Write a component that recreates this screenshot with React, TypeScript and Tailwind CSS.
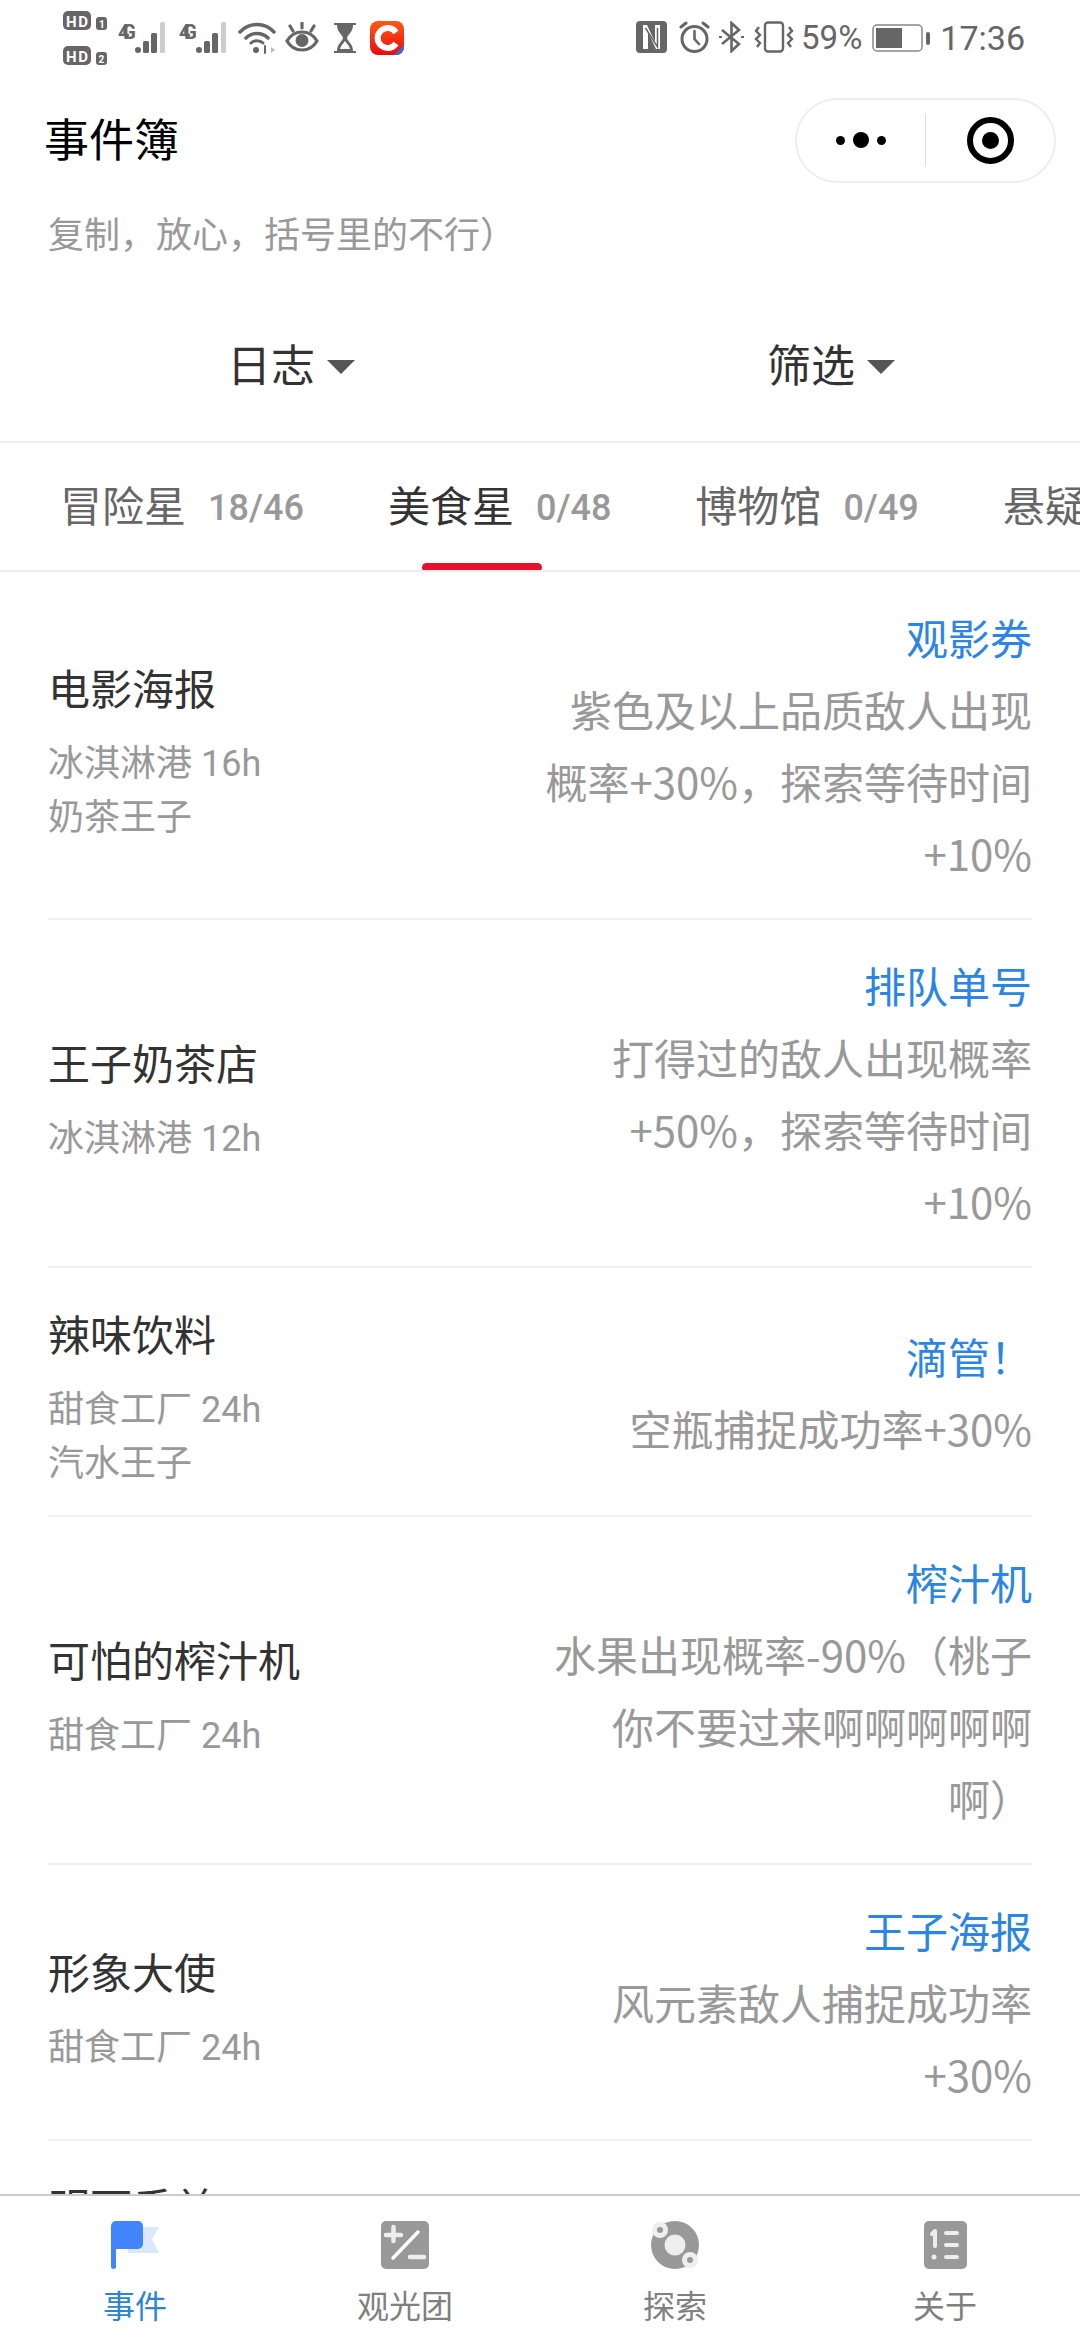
import React from 'react';

interface EventRow {
  title: string;
  subs: string[];
  reward: string;
  desc: string;
}

const rows: EventRow[] = [
  { title: '电影海报', subs: ['冰淇淋港 16h', '奶茶王子'], reward: '观影券', desc: '紫色及以上品质敌人出现概率+30%，探索等待时间+10%' },
  { title: '王子奶茶店', subs: ['冰淇淋港 12h'], reward: '排队单号', desc: '打得过的敌人出现概率+50%，探索等待时间+10%' },
  { title: '辣味饮料', subs: ['甜食工厂 24h', '汽水王子'], reward: '滴管！', desc: '空瓶捕捉成功率+30%' },
  { title: '可怕的榨汁机', subs: ['甜食工厂 24h'], reward: '榨汁机', desc: '水果出现概率-90%（桃子你不要过来啊啊啊啊啊\n啊）' },
  { title: '形象大使', subs: ['甜食工厂 24h'], reward: '王子海报', desc: '风元素敌人捕捉成功率+30%' },
  { title: '明可香兰 3D', subs: ['甜食工厂 24h', '汽水王子'], reward: '滴管！', desc: '空瓶捕捉成功率+30%' },
];

const tabs = [
  { name: '冒险星', count: '18/46' },
  { name: '美食星', count: '0/48', active: true },
  { name: '博物馆', count: '0/49' },
  { name: '悬疑推理', count: '0/32' },
];

function Signal() {
  return (
    <svg width="50" height="34" viewBox="0 0 50 34">
      <text x="0" y="17" fontSize="20" fontWeight="700" fill="#666" fontFamily="Roboto" textLength="18">4G</text>
      <rect x="17" y="25" width="6" height="6" rx="3" fill="#666" />
      <rect x="25" y="19" width="6" height="12" rx="1.5" fill="#666" />
      <rect x="33" y="11" width="6" height="20" rx="1.5" fill="#666" />
      <rect x="42" y="0" width="5" height="31" rx="1.5" fill="#ccc" />
    </svg>
  );
}

function HdMarks() {
  return (
    <svg width="46" height="56" viewBox="0 0 46 56">
      <rect x="0" y="1" width="28" height="19" rx="5" fill="#666" />
      <text x="3" y="16.5" fontSize="15" fontWeight="700" fill="#fff" fontFamily="Roboto" textLength="22">HD</text>
      <rect x="33" y="7" width="11" height="13" rx="3" fill="#666" />
      <text x="36" y="18" fontSize="10" fontWeight="700" fill="#fff" fontFamily="Roboto">1</text>
      <rect x="0" y="36" width="28" height="19" rx="5" fill="#666" />
      <text x="3" y="51.5" fontSize="15" fontWeight="700" fill="#fff" fontFamily="Roboto" textLength="22">HD</text>
      <rect x="33" y="42" width="11" height="13" rx="3" fill="#666" />
      <text x="35.5" y="53" fontSize="10" fontWeight="700" fill="#fff" fontFamily="Roboto">2</text>
    </svg>
  );
}

function StatusBar() {
  return (
    <div className="flex h-[70px] items-start justify-between pr-[55px] pl-[63px] text-[#666]">
      <div className="flex items-start">
        <div className="mt-[10px]"><HdMarks /></div>
        <div className="mt-[22px] ml-[9px]"><Signal /></div>
        <div className="mt-[22px] ml-[11px]"><Signal /></div>
        <svg className="mt-[22px] ml-[9px]" width="38" height="32" viewBox="0 0 38 32" fill="none" stroke="#666" strokeWidth="3.5" strokeLinecap="round">
          <path d="M2 10 C11 0 27 0 36 10" />
          <path d="M8 16 C14 10 24 10 30 16" />
          <path d="M13 21 C16 18 22 18 25 21" strokeWidth="3" />
          <circle cx="18" cy="28" r="3" fill="#666" stroke="none" />
          <path d="M27 24 V31" strokeWidth="2" />
          <path d="M33 25 L37 28 L33 31 Z" fill="#bbb" stroke="none" />
        </svg>
        <svg className="mt-[22px] ml-[9px]" width="34" height="32" viewBox="0 0 34 32" fill="none" stroke="#666" strokeWidth="3.2" strokeLinecap="round">
          <path d="M2 19 C9 7 25 7 32 19 C25 31 9 31 2 19 Z" />
          <circle cx="17" cy="18.5" r="6.5" fill="#666" stroke="none" />
          <path d="M17 1 V6 M5 4 L8 9 M29 4 L26 9" />
        </svg>
        <svg className="mt-[22px] ml-[14px]" width="24" height="32" viewBox="0 0 24 32">
          <path d="M1 1 H23 V3 H20 C20 10 15 12 14 16 C15 20 20 22 20 29 H23 V31 H1 V29 H4 C4 22 9 20 10 16 C9 12 4 10 4 3 H1 Z" fill="#666" />
          <path d="M7 27 C8 23 11 21 12 19 C13 21 16 23 17 27 Z" fill="#fff" />
          <path d="M9 29 C10 26 14 26 15 29 Z" fill="#666" />
        </svg>
        <svg className="mt-[21px] ml-[13px]" width="34" height="34" viewBox="0 0 34 34">
          <defs>
            <linearGradient id="cIcon" x1="0" y1="0" x2="0" y2="1">
              <stop offset="0" stopColor="#ff5a12" />
              <stop offset="1" stopColor="#e90b12" />
            </linearGradient>
          </defs>
          <rect width="34" height="34" rx="8" fill="url(#cIcon)" />
          <path d="M26 11.5 A10 10 0 1 0 26 22.5" fill="none" stroke="#fff" strokeWidth="6" />
          <path d="M34 24 V26 A8 8 0 0 1 26 34 H24 Z" fill="#2d6fd8" />
        </svg>
      </div>
      <div className="mt-[20px] flex items-start">
        <svg className="mt-[1px]" width="31" height="32" viewBox="0 0 31 32">
          <rect width="31" height="32" rx="4" fill="#666" />
          <path d="M9 4 H7 V28 H12 V11 L20 28 H24 V4 H19 V21 L11 4 Z" fill="#fff" />
          <path d="M9.5 7 L21.5 26 V7" fill="none" stroke="#666" strokeWidth="1.5" />
        </svg>
        <svg className="mt-[1px] ml-[12px]" width="31" height="32" viewBox="0 0 31 32" fill="none" stroke="#666" strokeWidth="3" strokeLinecap="round">
          <circle cx="15.5" cy="18" r="12.5" />
          <path d="M15.5 10 V18 L20 23" strokeWidth="2.6" />
          <path d="M2 6 L7 2 M29 6 L24 2" />
        </svg>
        <svg className="mt-[1px] ml-[9px]" width="25" height="32" viewBox="0 0 25 32" fill="none" stroke="#666" strokeWidth="2.6">
          <path d="M3 9 L20 23 L12.5 30 V2 L20 9 L3 23" />
          <path d="M0 16 H3 M22 16 H25" strokeWidth="2" />
        </svg>
        <svg className="mt-[1px] ml-[10px]" width="40" height="32" viewBox="0 0 40 32" fill="none" stroke="#666" strokeWidth="2.4">
          <rect x="11" y="1.5" width="18" height="29" rx="3" />
          <path d="M5 6 L2 10 L6 14 L2 18 L6 22 L3 26" />
          <path d="M35 6 L38 10 L34 14 L38 18 L34 22 L37 26" />
        </svg>
        <span className="ml-[7px] text-[33px] leading-[36px]">59%</span>
        <svg className="mt-[4px] ml-[10px]" width="59" height="28" viewBox="0 0 59 28">
          <rect x="1" y="1" width="49" height="26" rx="4" fill="none" stroke="#888" strokeWidth="1.5" />
          <rect x="4" y="4" width="26" height="20" fill="#666" />
          <rect x="54" y="8" width="4" height="13" rx="2" fill="#666" />
        </svg>
        <span className="ml-[9px] text-[34px] leading-[36px]">17:36</span>
      </div>
    </div>
  );
}

function Capsule() {
  return (
    <div className="flex h-[85px] w-[261px] items-center rounded-full border-2 border-[#eee] bg-white">
      <div className="flex w-[128px] items-center justify-center gap-[8px]">
        <span className="h-[9px] w-[9px] rounded-full bg-black" />
        <span className="h-[16px] w-[16px] rounded-full bg-black" />
        <span className="h-[9px] w-[9px] rounded-full bg-black" />
      </div>
      <div className="h-[52px] w-px bg-[#ddd]" />
      <div className="flex flex-1 items-center justify-center">
        <div className="flex h-[47px] w-[47px] items-center justify-center rounded-full border-[6px] border-black">
          <span className="h-[17px] w-[17px] rounded-full bg-black" />
        </div>
      </div>
    </div>
  );
}

function Filter({ label }: { label: string }) {
  return (
    <div className="flex w-[540px] items-center justify-center gap-[12px] pt-[2px] pl-[42px]">
      <span className="text-[44px] text-[#333]">{label}</span>
      <span className="h-0 w-0 border-x-[14px] border-t-[14px] border-x-transparent border-t-[#555]" />
    </div>
  );
}

function TabStrip() {
  return (
    <div className="flex h-[131px] items-center gap-[84px] overflow-hidden border-y-2 border-[#eee] pl-[60px]">
      {tabs.map((tab) => (
        <div key={tab.name} className="relative flex h-full shrink-0 items-center gap-[22px] pt-[2px] whitespace-nowrap">
          <span className={`text-[42px] ${tab.active ? 'text-[#333]' : 'text-[#666]'}`}>{tab.name}</span>
          <span className="text-[36px] font-medium text-[#999]">{tab.count}</span>
          {tab.active && <span className="absolute bottom-[-2px] left-[34px] h-[9px] w-[120px] rounded-full bg-[#e8112d]" />}
        </div>
      ))}
    </div>
  );
}

function Row({ row }: { row: EventRow }) {
  return (
    <div className="flex items-center justify-between border-b-2 border-[#f0f0f0] py-[29px]">
      <div className="translate-y-[5px]">
        <div className="text-[42px] leading-[70px] text-[#333]">{row.title}</div>
        <div className="mt-[11px] text-[36px] leading-[54px] text-[#999]">
          {row.subs.map((sub) => (
            <div key={sub}>{sub}</div>
          ))}
        </div>
      </div>
      <div className="w-[490px] text-right text-[42px] leading-[72px] font-['Noto_Sans_CJK_SC',sans-serif]">
        <div className="text-[#2b85e4]">{row.reward}</div>
        <div className="whitespace-pre-line text-[#999]">{row.desc}</div>
      </div>
    </div>
  );
}

function FlagIcon() {
  return (
    <svg width="48" height="48" viewBox="0 0 48 48">
      <path d="M17 6 H48 L41 18 L48 32 H17 Z" fill="#dbe8fb" />
      <path d="M0 5 A5 5 0 0 1 5 0 H27 A5 5 0 0 1 32 5 V23 A5 5 0 0 1 27 28 H5 V45.5 A2.5 2.5 0 0 1 0 45.5 Z" fill="#4285fb" />
    </svg>
  );
}

function PlusMinusIcon() {
  return (
    <svg width="48" height="48" viewBox="0 0 48 48">
      <rect width="48" height="48" rx="5" fill="#999" />
      <path d="M5 14 H20 M12.5 6 V20 M29 36 H43" stroke="#eee" strokeWidth="4.5" strokeLinecap="round" fill="none" />
      <path d="M12 37 L37 11" stroke="#fff" strokeWidth="3.5" strokeLinecap="round" fill="none" />
    </svg>
  );
}

function DiscIcon() {
  return (
    <svg width="48" height="48" viewBox="0 0 48 48">
      <circle cx="24" cy="24" r="24" fill="#999" />
      <circle cx="24" cy="24" r="10.5" fill="#eee" />
      <circle cx="9" cy="9" r="8" fill="#eee" />
      <circle cx="9" cy="9" r="3" fill="#999" />
      <circle cx="39" cy="39" r="8" fill="#eee" />
      <circle cx="39" cy="39" r="3" fill="#999" />
    </svg>
  );
}

function ListIcon() {
  return (
    <svg width="43" height="48" viewBox="0 0 43 48">
      <rect width="43" height="48" rx="5" fill="#999" />
      <path d="M22 12 H33 M22 24 H33 M22 36 H33" stroke="#eee" strokeWidth="4" strokeLinecap="round" fill="none" />
      <path d="M8 13 L11 10 V25" stroke="#eee" strokeWidth="4" strokeLinecap="round" strokeLinejoin="round" fill="none" />
      <circle cx="10" cy="36" r="2.5" fill="#eee" />
    </svg>
  );
}

const nav = [
  { label: '事件', icon: <FlagIcon />, active: true },
  { label: '观光团', icon: <PlusMinusIcon /> },
  { label: '探索', icon: <DiscIcon /> },
  { label: '关于', icon: <ListIcon /> },
];

export default function App() {
  return (
    <div className="flex h-[2340px] w-[1080px] flex-col overflow-hidden bg-white font-['Roboto','Noto_Sans_CJK_SC',sans-serif]">
      <StatusBar />
      <div className="flex h-[140px] items-center justify-between pr-[24px] pl-[44px]">
        <span className="pt-[4px] text-[45px] text-black">事件簿</span>
        <Capsule />
      </div>
      <div className="mt-[8px] pl-[48px] text-[36px] leading-[36px] text-[#999]">复制，放心，括号里的不行）</div>
      <div className="mt-[37px] flex h-[150px] items-center">
        <Filter label="日志" />
        <Filter label="筛选" />
      </div>
      <TabStrip />
      <div className="min-h-0 flex-1 overflow-hidden px-[48px]">
        {rows.map((row) => (
          <Row key={row.title} row={row} />
        ))}
      </div>
      <div className="flex h-[146px] shrink-0 border-t-2 border-[#ccc] bg-white">
        {nav.map((item) => (
          <div key={item.label} className="flex flex-1 flex-col items-center pt-[25px]">
            <div className="flex h-[48px] items-center justify-center">{item.icon}</div>
            <span className={`mt-[18px] text-[32px] leading-[40px] ${item.active ? 'text-[#2b85d4]' : 'text-[#808080]'}`}>{item.label}</span>
          </div>
        ))}
      </div>
    </div>
  );
}
